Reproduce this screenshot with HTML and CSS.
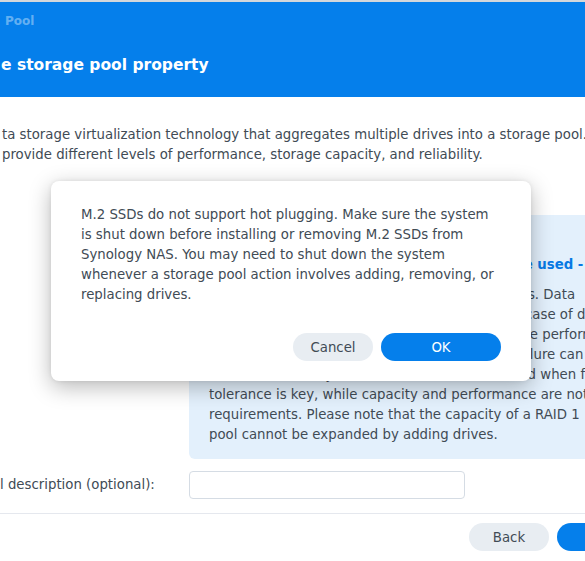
FILE: index.html
```html
<!DOCTYPE html>
<html lang="en">
<head>
<meta charset="utf-8">
<title>Create Storage Pool</title>
<link rel="stylesheet" href="styles.css">
</head>
<body>

<div class="page">
	<div class="topline"></div>

	<div class="hero">
		<div class="hero-step">Pool</div>
		<h1 class="hero-title">e storage pool property</h1>
	</div>

	<div class="intro">
		<p>ta storage virtualization technology that aggregates multiple drives into a storage pool.</p>
		<p>provide different levels of performance, storage capacity, and reliability.</p>
	</div>

	<div class="raid-info">
		<div class="raid-title">
			<div class="line">RAID 1 is recommended</div>
			<div class="line">when two or more drives of equal sizes are used - </div>
		</div>
		<div class="raid-desc">
			<div class="line">RAID 1 stores identical copies on all of the drives. Data</div>
			<div class="line">remains still accessible and safely protected in case of drive</div>
			<div class="line">failure. Read speed improves notably, while write performance</div>
			<div class="line">stays the same as that of a single disk. Drive failure can</div>
			<div class="line">be tolerated easily. Thus RAID 1 is recommended when fault</div>
			<div class="line">tolerance is key, while capacity and performance are not</div>
			<div class="line">requirements. Please note that the capacity of a RAID 1</div>
			<div class="line">pool cannot be expanded by adding drives.</div>
		</div>
	</div>

	<div class="form-row">
		<label class="form-label" for="desc">l description (optional):</label>
		<input class="form-input" id="desc" type="text">
	</div>

	<div class="divider"></div>

	<div class="footer">
		<button class="btn btn-grey">Back</button>
		<button class="btn btn-blue btn-wide">Next</button>
	</div>
</div>

<!-- confirmation popup, sits over the wizard -->
<div class="dialog">
	<p class="dialog-text">M.2 SSDs do not support hot plugging. Make sure the system<br>
	is shut down before installing or removing M.2 SSDs from<br>
	Synology NAS. You may need to shut down the system<br>
	whenever a storage pool action involves adding, removing, or<br>
	replacing drives.</p>
	<div class="dialog-buttons">
		<button class="btn btn-grey">Cancel</button>
		<button class="btn btn-blue btn-wide">OK</button>
	</div>
</div>

</body>
</html>
```

FILE: styles.css
```css
html, body {
	margin: 0;
	padding: 0;
	width: 585px;
	height: 561px;
	overflow: hidden;
	background: #fff;
}

body {
	position: relative;
	font-family: "DejaVu Sans", Verdana, sans-serif;
	font-size: 13.3px;
	line-height: 20px;
	color: #414b55;
}

.page {
	width: 660px;
}

.topline {
	height: 2px;
	background: #d3d7db;
}

.hero {
	height: 95px;
	box-sizing: border-box;
	padding-top: 11px;
	background: #057feb;
	color: #fff;
}

.hero-step {
	padding-left: 5px;
	font-size: 12px;
	font-weight: bold;
	line-height: 16px;
	color: rgba(255, 255, 255, 0.4);
}

.hero-title {
	margin: 25px 0 0 0;
	padding-left: 1px;
	font-size: 15.5px;
	font-weight: bold;
	line-height: 22px;
}

.intro {
	margin-top: 28px;
	padding-left: 2px;
}

.intro p {
	margin: 0;
	white-space: nowrap;
}

.raid-info {
	margin: 50px 0 0 189px;
	padding: 20px 20px 14px 20px;
	background: #e3f0fc;
	border-bottom-left-radius: 6px;
}

.line { white-space: nowrap; }

.raid-title {
	font-weight: bold;
	color: #0779e4;
}

.raid-desc {
	margin-top: 10px;
}

.form-row {
	display: flex;
	align-items: center;
	margin-top: 12px;
}

.form-label {
	width: 189px;
	flex: none;
}

.form-input {
	width: 276px;
	height: 28px;
	box-sizing: border-box;
	margin: 0;
	border: 1px solid #d5dce4;
	border-radius: 4px;
	background: #fff;
	font: inherit;
}

.divider {
	margin-top: 14px;
	height: 1px;
	background: #e5e8ee;
}

.footer {
	display: flex;
	justify-content: flex-end;
	gap: 8px;
	margin-top: 9px;
}

.btn {
	width: 80px;
	height: 28px;
	padding: 0;
	border: none;
	border-radius: 14px;
	font-family: inherit;
	font-size: 13.3px;
	cursor: pointer;
}

.btn-grey {
	background: #e8edf2;
	color: #414b55;
}

.btn-blue {
	background: #057feb;
	color: #fff;
}

.btn-wide { width: 120px; }

.footer .btn-wide { margin-right: -17px; }

.dialog {
	position: absolute;
	left: 51px;
	top: 181px;
	width: 480px;
	height: 200px;
	box-sizing: border-box;
	padding: 24px 30px 20px 30px;
	display: flex;
	flex-direction: column;
	background: #fff;
	border-radius: 8px;
	box-shadow: 0 6px 22px rgba(0, 0, 0, 0.28), 0 0 4px rgba(0, 0, 0, 0.08);
}

.dialog-text {
	margin: 0;
	white-space: nowrap;
}

.dialog-buttons {
	margin-top: auto;
	display: flex;
	justify-content: flex-end;
	gap: 8px;
}
```
